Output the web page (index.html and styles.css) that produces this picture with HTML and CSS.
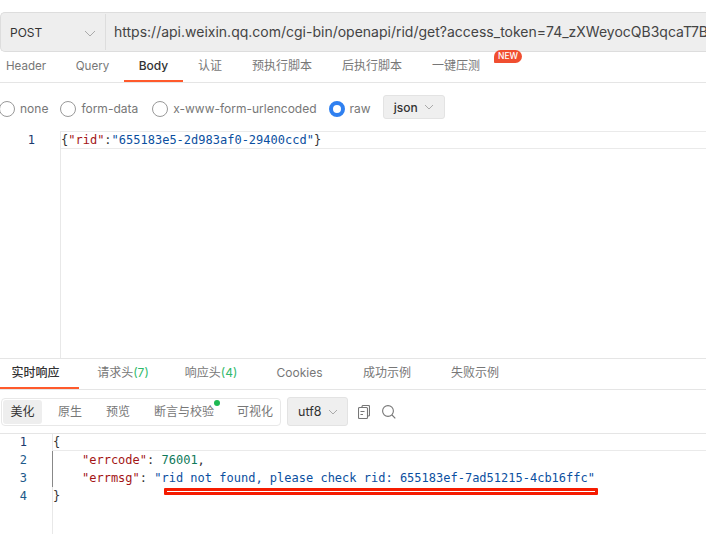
FILE: index.html
```html
<!DOCTYPE html>
<html lang="zh">
<head>
<meta charset="utf-8">
<title>POST</title>
<link rel="stylesheet" href="styles.css">
</head>
<body>
<div class="page">
  <div class="urlbar">
    <div class="method"><span>POST</span>
      <svg class="chev" width="12" height="7" viewBox="0 0 12 7"><path d="M1 1l5 5 5-5"/></svg>
    </div>
    <div class="url">https://api.weixin.qq.com/cgi-bin/openapi/rid/get?access_token=74_zXWeyocQB3qcaT7B</div>
  </div>
  <div class="tabs reqtabs">
    <span class="tab t1">Header</span>
    <span class="tab t2">Query</span>
    <span class="tab t3 active">Body</span>
    <span class="tab t4">认证</span>
    <span class="tab t5">预执行脚本</span>
    <span class="tab t6">后执行脚本</span>
    <span class="tab t7">一键压测<span class="new">NEW</span></span>
  </div>
  <div class="bodytypes">
    <label class="radio r1"><i class="dot"></i>none</label>
    <label class="radio r2"><i class="dot"></i>form-data</label>
    <label class="radio r3"><i class="dot"></i>x-www-form-urlencoded</label>
    <label class="radio r4"><i class="dot on"></i>raw</label>
    <div class="select json">json
      <svg class="chev" width="10" height="6" viewBox="0 0 10 6"><path d="M1 1l4 4 4-4"/></svg>
    </div>
  </div>
  <div class="editor reqeditor">
    <div class="gutter g60"><div class="ln first">1</div></div>
    <div class="code">
      <div class="line activeline"><span class="p">{</span><span class="k">"rid"</span><span class="p">:</span><span class="s">"655183e5-2d983af0-29400ccd"</span><span class="p">}</span></div>
    </div>
  </div>
  <div class="tabs restabs">
    <span class="tab u1 active">实时响应</span>
    <span class="tab u2">请求头<em>(7)</em></span>
    <span class="tab u3">响应头<em>(4)</em></span>
    <span class="tab u4">Cookies</span>
    <span class="tab u5">成功示例</span>
    <span class="tab u6">失败示例</span>
  </div>
  <div class="toolbar">
    <div class="seg">
      <span class="segitem sel">美化</span>
      <span class="segitem w1">原生</span>
      <span class="segitem w2">预览</span>
      <span class="segitem w3">断言与校验<i class="green"></i></span>
      <span class="segitem w4">可视化</span>
    </div>
    <div class="select utf">utf8
      <svg class="chev" width="10" height="6" viewBox="0 0 10 6"><path d="M1 1l4 4 4-4"/></svg>
    </div>
    <svg class="icon copy" width="12" height="14" viewBox="0 0 12 14"><path d="M4 2.500V1.500a1 1 0 0 1 1-1h5.500a1 1 0 0 1 1 1V10a1 1 0 0 1-1 1H9.500"/><rect x="0.500" y="2.500" width="9" height="11" rx="1"/><path d="M2.500 6.500h4M2.500 9.500h2.500"/></svg>
    <svg class="icon search" width="14" height="14" viewBox="0 0 14 14"><circle cx="6" cy="6" r="5.400"/><path d="M10 10l3.300 3.300"/></svg>
  </div>
  <div class="editor reseditor">
    <div class="gutter g53">
      <div class="ln first">1</div>
      <div class="ln">2</div>
      <div class="ln">3</div>
      <div class="ln">4</div>
    </div>
    <div class="code">
      <div class="line activeline"><span class="p">{</span></div>
      <div class="line indent"><span class="k">"errcode"</span><span class="p">: </span><span class="n">76001</span><span class="p">,</span></div>
      <div class="line indent"><span class="k">"errmsg"</span><span class="p">: </span><span class="s">"rid not found, please check rid: 655183ef-7ad51215-4cb16ffc"</span></div>
      <div class="line"><span class="p">}</span></div>
      <div class="redline"></div>
    </div>
  </div>
</div>
</body>
</html>
```
FILE: styles.css
```css
* { box-sizing: border-box; }
html, body { margin: 0; padding: 0; background: #fff; }
body { width: 706px; height: 534px; overflow: hidden; font-family: Inter, "Noto Sans CJK SC", sans-serif; color: #666; }
.page { display: flex; flex-direction: column; height: 534px; padding-top: 12px; overflow: hidden; }
.chev { fill: none; stroke: #aaa; stroke-width: 1; }

.urlbar { display: flex; height: 40px; background: #eee; border: 1px solid #ddd; border-right: 0; border-radius: 5px 0 0 5px; flex: none; }
.method { width: 105px; flex: none; display: flex; align-items: center; justify-content: space-between; padding: 0 9px 0 9px; border-right: 1px solid #ddd; margin: 1px 0; font-size: 12px; color: #333; }
.method .chev { margin-top: 2px; }
.url { flex: 1; min-width: 0; padding-left: 8px; line-height: 37px; font-size: 14px; color: #444; white-space: nowrap; overflow: hidden; }

.tabs { display: flex; flex: none; border-bottom: 1px solid #e5e5e5; font-size: 12px; }
.reqtabs { height: 31px; }
.restabs { border-top: 1px solid #e5e5e5; height: 32px; }
.tab { position: relative; display: block; white-space: nowrap; text-align: center; line-height: 28px; height: 30px; color: #777; flex: none; }
.tab.active { color: #333; font-weight: 500; border-bottom: 2px solid #ff5a2c; }
.t1 { width: 61px; text-align: left; padding-left: 6px; font-size: 11.600px; }
.t2 { width: 63px; font-size: 11.600px; }
.t3 { width: 59px; }
.t4 { width: 54px; }
.t5 { width: 90px; }
.t6 { width: 90px; }
.t7 { width: 78px; }
.new { position: absolute; left: 77px; top: -2px; width: 28px; height: 13px; background: #f04e30; color: #fff; font-size: 8.500px; line-height: 13px; border-radius: 7px 7px 7px 1px; font-weight: 500; }

.u1 { width: 79px; padding-right: 8px; }
.u2 { width: 88px; }
.u3 { width: 88px; }
.u4 { width: 89px; }
.u5 { width: 86px; }
.u6 { width: 90px; }
.tab em { font-style: normal; color: #2fb96b; }
.restabs .tab { height: 30px; line-height: 27px; }

.bodytypes { height: 48px; flex: none; display: flex; align-items: center; font-size: 12px; color: #777; }
.radio { display: flex; align-items: center; gap: 5px; margin-top: 3px; }
.dot { width: 16px; height: 16px; border-radius: 50%; border: 1px solid #999; background: #fff; flex: none; }
.dot.on { border: 4px solid #2f80f0; }
.r1 { margin-left: -1px; }
.r2 { margin-left: 12px; }
.r3 { margin-left: 14px; }
.r4 { margin-left: 12px; }
.select { display: flex; align-items: center; background: #efefef; border: 1px solid #e3e3e3; border-radius: 3px; color: #333; font-size: 12px; }
.json { width: 62px; height: 24px; margin-left: 12px; padding-left: 10px; gap: 6px; font-weight: 500; }

.editor { display: flex; font-family: "DejaVu Sans Mono", monospace; font-size: 12px; line-height: 18px; }
.reqeditor { height: 227px; flex: none; }
.reseditor { flex: 1; min-height: 0; border-top: 1px solid #e5e5e5; }
.gutter { flex: none; border-right: 1px solid #e8e8e8; color: #1d5a8a; }
.g60 { width: 61px; }
.g53 { width: 53px; }
.ln { height: 18px; text-align: right; padding-right: 25px; }
.ln.first { color: #1c3a6e; }
.g53 .ln.first { height: 17px; line-height: 16px; }
.code { flex: 1; position: relative; min-width: 0; }
.line { height: 18px; color: #333; white-space: pre; }
.activeline { height: 18px; line-height: 17px; border-top: 1px solid #eaeaea; border-bottom: 1px solid #eaeaea; }
.reseditor .activeline { height: 17px; border-top: 0; line-height: 16px; }
.indent { padding-left: 29px; box-shadow: -1px 0 0 #888; }
.k { color: #a31515; }
.s { color: #0b4fa0; }
.n { color: #0f7a5a; }
.p { color: #333; }
.redline { position: absolute; left: 111px; top: 54px; width: 434px; height: 7px; background: #fff; border: 3px solid #f51b00; border-radius: 1px; }

.toolbar { height: 43px; flex: none; display: flex; align-items: center; font-size: 12px; padding-left: 1px; }
.seg { display: flex; align-items: center; width: 280px; height: 28px; border: 1px solid #e8e8e8; border-radius: 4px; color: #777; flex: none; }
.segitem { position: relative; text-align: center; line-height: 24px; height: 24px; flex: none; white-space: nowrap; }
.sel { width: 39px; margin-left: 1px; background: #eee; border-radius: 3px; color: #333; }
.w1 { width: 56px; }
.w2 { width: 40px; }
.w3 { width: 92px; }
.w4 { width: 50px; }
.green { position: absolute; left: 76px; top: 0; width: 6px; height: 6px; border-radius: 50%; background: #1db954; }
.utf { width: 61px; height: 29px; margin-left: 6px; padding-left: 10px; gap: 6px; font-size: 12.500px; flex: none; }
.icon { fill: none; stroke: #777; stroke-width: 1.100; flex: none; }
.copy { margin-left: 10px; }
.search { margin-left: 12px; }
```
